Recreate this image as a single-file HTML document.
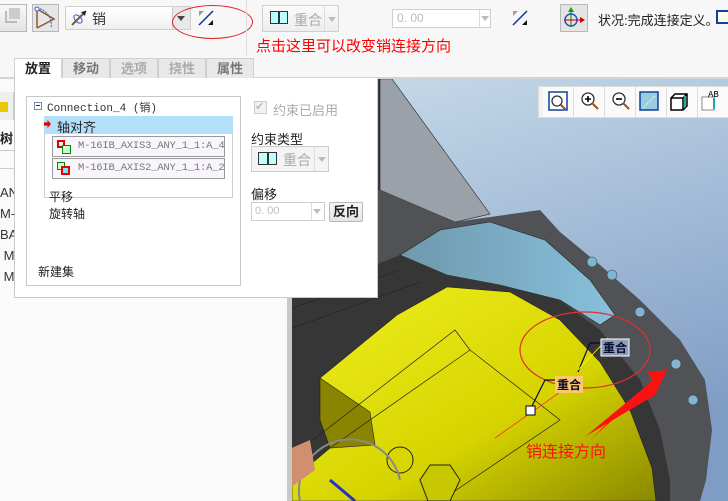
<!DOCTYPE html>
<html><head><meta charset="utf-8"><style>
*{margin:0;padding:0;box-sizing:border-box}
body{width:728px;height:501px;overflow:hidden;position:relative;background:#fafafa;font-family:"Liberation Sans","Noto Sans CJK SC",sans-serif;font-size:12px;color:#222}
.a{position:absolute}
.btn{position:absolute;border:1px solid #b8b8b8;background:linear-gradient(#f8f8f8,#e4e4e4)}
.cmb{position:absolute;border:1px solid #cfcfcf;background:#fff}
.tab{position:absolute;top:58px;height:20px;background:#e8e8e8;border:1px solid #d0d0d0;border-bottom:none;font-weight:bold;color:#888;font-size:13px;text-align:center;line-height:19px}
.vb{position:absolute;top:87px;width:31px;height:30px;border-right:1px solid #ddd;background:#fafafa}
</style></head><body>
<div class="a" style="left:0;top:0;width:728px;height:78px;background:#f7f7f7"></div>
<div class="btn" style="left:-2px;top:4px;width:29px;height:28px"></div>
<div class="a" style="left:5px;top:11px;width:12px;height:12px;border:2px solid #bbb;border-top:none;border-right:none"></div>
<div class="a" style="left:9px;top:8px;width:11px;height:11px;background:#ccc"></div>
<div class="btn" style="left:32px;top:4px;width:27px;height:28px;background:#e6e6e6"></div>
<svg class="a" style="left:32px;top:4px" width="27" height="28"><path d="M5 5 L5 24 M5 5 L22 15 L5 24" stroke="#8a5a2a" stroke-width="1.5" fill="none"/><path d="M5 4 A17 17 0 0 1 19 24" stroke="#3060d0" fill="none" stroke-dasharray="2 1"/><circle cx="5" cy="5" r="2" fill="#fff" stroke="#3060d0"/></svg>
<div class="cmb" style="left:65px;top:6px;width:126px;height:24px;background:linear-gradient(#fff,#f0f0f0)"></div>
<svg class="a" style="left:70px;top:9px" width="20" height="18"><path d="M2 16 L16 2" stroke="#8a5a2a" stroke-width="2"/><path d="M16 2 l-5 1 l4 4z" fill="#222"/><ellipse cx="8" cy="10" rx="5" ry="3" stroke="#3060d0" fill="none" transform="rotate(45 8 10)"/></svg>
<div class="a" style="left:92px;top:9px;font-size:14px;color:#333">销</div>
<div class="a" style="left:172px;top:7px;width:18px;height:22px;border-left:1px solid #ccc;background:#e8e8e8"></div>
<div class="a" style="left:177px;top:16px;border:4px solid transparent;border-top:5px solid #444"></div>
<svg class="a" style="left:196px;top:9px" width="20" height="18"><path d="M3 16 L17 2" stroke="#1030a0" stroke-width="1.5"/><path d="M3 2 l5 0 l-5 5z" fill="#999"/><path d="M17 16 l-5 0 l5 -5z" fill="#111"/></svg>
<div class="a" style="left:172px;top:5px;width:81px;height:34px;border:1px solid #e02020;border-radius:50%"></div>
<div class="a" style="left:246px;top:0;width:1px;height:55px;background:#ddd"></div>
<div class="cmb" style="left:262px;top:5px;width:77px;height:27px;background:linear-gradient(#fafafa,#eee)"></div>
<div class="a" style="left:270px;top:11px;width:18px;height:13px;border:1px solid #333;background:#bff"></div>
<div class="a" style="left:278px;top:11px;width:2px;height:13px;background:#333"></div>
<div class="a" style="left:294px;top:10px;font-size:14px;color:#aaa">重合</div>
<div class="a" style="left:324px;top:6px;width:1px;height:25px;background:#ddd"></div>
<div class="a" style="left:328px;top:17px;border:4px solid transparent;border-top:5px solid #bbb"></div>
<div class="a" style="left:256px;top:35px;font-size:15px;color:#f00">点击这里可以改变销连接方向</div>
<div class="cmb" style="left:392px;top:9px;width:99px;height:19px"></div>
<div class="a" style="left:397px;top:11px;color:#bbb;font-size:12px">0. 00</div>
<div class="a" style="left:479px;top:10px;width:1px;height:17px;background:#ddd"></div>
<div class="a" style="left:481px;top:16px;border:4px solid transparent;border-top:5px solid #bbb"></div>
<svg class="a" style="left:510px;top:9px" width="20" height="18"><path d="M3 16 L17 2" stroke="#1030a0" stroke-width="1.5"/><path d="M3 2 l5 0 l-5 5z" fill="#999"/><path d="M17 16 l-5 0 l5 -5z" fill="#111"/></svg>
<div class="btn" style="left:560px;top:4px;width:28px;height:28px;background:#e4e4e4"></div>
<svg class="a" style="left:560px;top:4px" width="28" height="28"><circle cx="11" cy="16" r="6" stroke="#3050c0" fill="none" stroke-width="1.5"/><path d="M11 6 V23" stroke="#080"/><path d="M11 3 l-3 5 h6z" fill="#0a0"/><path d="M4 16 H22" stroke="#b00"/><path d="M25 16 l-5 -3 v6z" fill="#c00"/></svg>
<div class="a" style="left:598px;top:10px;font-size:13px;color:#222">状况:完成连接定义。</div>
<div class="a" style="left:716px;top:10px;width:14px;height:14px;border:2px solid #1040a0;background:#ffe"></div>
<div class="a" style="left:0;top:77px;width:728px;height:2px;background:#d4d4d4"></div>
<div class="tab" style="left:14px;width:48px;background:#fff;color:#222">放置</div>
<div class="tab" style="left:62px;width:48px;color:#777">移动</div>
<div class="tab" style="left:110px;width:48px;color:#aaa">选项</div>
<div class="tab" style="left:158px;width:48px;color:#aaa">挠性</div>
<div class="tab" style="left:206px;width:48px;color:#777">属性</div>
<div class="a" style="left:0;top:79px;width:288px;height:422px;background:#fafafa"></div>
<div class="a" style="left:0;top:92px;width:14px;height:28px;background:#eee;border-right:1px solid #ccc"></div>
<div class="a" style="left:0;top:102px;width:8px;height:10px;background:#e8c800"></div>
<div class="a" style="left:0;top:128px;font-weight:bold;font-size:13px">树</div>
<div class="a" style="left:0;top:150px;width:14px;height:1px;background:#ccc"></div>
<div class="a" style="left:0;top:168px;width:14px;height:1px;background:#ccc"></div>
<div class="a" style="left:0;top:182px;font-size:13px;color:#333;line-height:21px">AN<br>M-:<br>BAS<br>&nbsp;M<br>&nbsp;M</div>
<svg class="a" style="left:287px;top:79px" width="441" height="422" viewBox="287 79 441 422">
<defs><linearGradient id="bg" x1="0" y1="0" x2="0.3" y2="1"><stop offset="0" stop-color="#c8dcea"/><stop offset="1" stop-color="#7f9cc4"/></linearGradient>
<linearGradient id="yl" x1="0" y1="0" x2="1" y2="1"><stop offset="0" stop-color="#f0f020"/><stop offset="0.6" stop-color="#d6d400"/><stop offset="1" stop-color="#8a8800"/></linearGradient>
<linearGradient id="bl" x1="0" y1="0" x2="1" y2="0"><stop offset="0" stop-color="#6e98ac"/><stop offset="1" stop-color="#88c0dc"/></linearGradient></defs>
<rect x="287" y="79" width="441" height="422" fill="url(#bg)"/>
<polygon points="287,79 380,79 380,300 287,300" fill="#3a3a3a"/>
<polygon points="380,79 392,79 490,214 455,222 380,190" fill="#9aa1a8" stroke="#222" stroke-width="0.6"/>
<polygon points="287,200 380,190 455,222 540,210 560,232 600,265 640,300 680,340 705,380 712,430 706,480 700,501 287,501" fill="#505255"/>
<polygon points="400,255 440,230 490,222 545,240 590,280 615,315 600,325 560,300 500,285 447,275" fill="url(#bl)" stroke="#222" stroke-width="0.6"/>
<polygon points="287,300 400,255 447,275 500,285 560,300 600,330 640,380 660,430 670,480 670,501 287,501" fill="#363636"/>
<path d="M287 310 L400 270 M287 330 L420 282" stroke="#222" stroke-width="0.6"/>
<polygon points="320,378 397,315 447,287 510,292 560,320 600,362 630,410 652,468 656,501 292,501 292,480 330,448" fill="url(#yl)" stroke="#222" stroke-width="0.6"/>
<polygon points="320,378 370,412 375,445 330,448 320,420" fill="#8a8500" stroke="#222" stroke-width="0.6"/>
<path d="M330 448 L470 350 L560 420 L440 501 M470 350 L455 330 L300 450" stroke="#222" fill="none" stroke-width="0.7"/>
<circle cx="400" cy="460" r="13" fill="#d8d800" stroke="#222"/>
<polygon points="430,465 450,465 460,480 450,501 428,501 420,480" fill="#c8c800" stroke="#222"/>
<path d="M300 501 A40 40 0 0 1 400 480" stroke="#888" stroke-width="2" fill="none"/>
<path d="M330 480 L355 501" stroke="#2233cc" stroke-width="3"/>
<polygon points="287,450 310,440 315,470 287,490" fill="#d09070"/>
<g fill="#7fb6d0" stroke="#333" stroke-width="0.5"><circle cx="592" cy="262" r="5"/><circle cx="612" cy="275" r="5"/><circle cx="640" cy="312" r="5"/><circle cx="676" cy="364" r="5"/><circle cx="693" cy="400" r="5"/></g>
<ellipse cx="585" cy="350" rx="65" ry="38" stroke="#e03030" fill="none" stroke-width="1.2"/>
<path d="M495 438 L580 378" stroke="#ff3030" stroke-width="0.8" fill="none"/>
<polygon points="590,440 660,378 667,370 648,372 652,380" fill="#ff1010"/>
<polygon points="586,436 663,372 668,368 655,395" fill="#ff1010"/>
<path d="M530 410 L545 380 L570 380 M578 372 L590 343 L600 343" stroke="#0a0a30" stroke-width="1.2" fill="none"/>
<path d="M578 370 L608 338" stroke="#ff0" stroke-width="0.8"/>
<rect x="526" y="406" width="9" height="9" fill="#fff" stroke="#000"/>
<rect x="555" y="376" width="28" height="17" fill="#fac870"/>
<text x="557" y="389" font-size="12" font-weight="bold" fill="#0a0a30" font-family="Noto Sans CJK SC,sans-serif">重合</text>
<rect x="601" y="339" width="28" height="17" fill="#8aa0b8" stroke="#fff"/>
<text x="603" y="352" font-size="12" font-weight="bold" fill="#0a0a30" font-family="Noto Sans CJK SC,sans-serif">重合</text>
<text x="526" y="457" font-size="16" fill="#ff1010" font-family="Noto Sans CJK SC,sans-serif">销连接方向</text>
<rect x="287" y="79" width="5" height="422" fill="#c8c8c8"/>
</svg>
<div class="a" style="left:538px;top:86px;width:190px;height:32px;background:#f2f2f2;border:1px solid #ddd"></div>
<div class="vb" style="left:543px"></div><div class="vb" style="left:574px"></div><div class="vb" style="left:605px"></div><div class="vb" style="left:636px"></div><div class="vb" style="left:667px"></div><div class="vb" style="left:698px"></div>
<svg class="a" style="left:543px;top:87px" width="185" height="30">
<rect x="6" y="5" width="18" height="18" fill="#fff" stroke="#1040a0" stroke-width="1.5"/><circle cx="14" cy="14" r="5" fill="none" stroke="#333" stroke-width="1.3"/><path d="M18 18 L23 23" stroke="#a05020" stroke-width="2"/>
<circle cx="45" cy="12" r="6" fill="#fff" stroke="#333" stroke-width="1.3"/><path d="M42 12h6M45 9v6" stroke="#000" stroke-width="1.6"/><path d="M49 16 L55 22" stroke="#a05020" stroke-width="2"/>
<circle cx="76" cy="12" r="6" fill="#fff" stroke="#333" stroke-width="1.3"/><path d="M73 12h6" stroke="#000" stroke-width="1.6"/><path d="M80 16 L86 22" stroke="#a05020" stroke-width="2"/>
<rect x="97" y="5" width="18" height="18" fill="#9cd" stroke="#1040a0" stroke-width="1.5"/><path d="M100 21 L113 8" stroke="#fff" stroke-dasharray="1 1"/>
<path d="M128 11 l4 -4 h12 v12 l-4 4 h-12z M128 11 h12 v12 M140 11 l4 -4" fill="#fff" stroke="#000" stroke-width="1.5"/><rect x="141" y="9" width="2" height="11" fill="#2aa"/>
<path d="M159 10 h12 v13 h-12z" fill="#fff" stroke="#888"/><rect x="170" y="11" width="2" height="11" fill="#2aa"/><text x="165" y="10" font-size="9" font-family="Liberation Mono">AB</text>
</svg>
<div class="a" style="left:14px;top:78px;width:364px;height:220px;background:#fff;border:1px solid #c8c8c8;border-top:none"></div>
<div class="a" style="left:26px;top:96px;width:215px;height:190px;border:1px solid #c8c8c8;background:#fff"></div>
<div class="a" style="left:34px;top:102px;width:8px;height:8px;border:1px solid #7a8aa0;background:#fff"></div>
<div class="a" style="left:36px;top:105px;width:4px;height:1px;background:#333"></div>
<div class="a" style="left:47px;top:99px;font-family:'Liberation Mono','Noto Sans CJK SC',monospace;font-size:11px;color:#333">Connection_4 (销)</div>
<div class="a" style="left:44px;top:116px;width:189px;height:18px;background:#b3e0f8"></div>
<div class="a" style="left:44px;top:120px;width:7px;height:8px;background:#e00;clip-path:polygon(0 30%,50% 30%,50% 0,100% 50%,50% 100%,50% 70%,0 70%)"></div>
<div class="a" style="left:57px;top:117px;font-size:13px">轴对齐</div>
<div class="a" style="left:44px;top:134px;width:189px;height:64px;border:1px solid #ccc;border-top:none"></div>
<div class="a" style="left:52px;top:136px;width:173px;height:21px;border:1px solid #999;background:#f8f6fc"></div>
<div class="a" style="left:52px;top:158px;width:173px;height:21px;border:1px solid #999;background:#f8f6fc"></div>
<div class="a" style="left:57px;top:140px;width:8px;height:8px;border:2px solid #d00"></div><div class="a" style="left:62px;top:145px;width:9px;height:9px;border:1px solid #080;background:#cfc"></div>
<div class="a" style="left:57px;top:162px;width:8px;height:8px;border:1px solid #080;background:#cfc"></div><div class="a" style="left:61px;top:166px;width:9px;height:9px;border:2px solid #e00;background:#6ef"></div>
<div class="a" style="left:78px;top:140px;font-family:'Liberation Mono',monospace;font-size:10.5px;letter-spacing:-0.2px;color:#777">M-16IB_AXIS3_ANY_1_1:A_4</div>
<div class="a" style="left:78px;top:162px;font-family:'Liberation Mono',monospace;font-size:10.5px;letter-spacing:-0.2px;color:#777">M-16IB_AXIS2_ANY_1_1:A_2</div>
<div class="a" style="left:49px;top:189px;font-size:12px;line-height:17px">平移<br>旋转轴</div>
<div class="a" style="left:38px;top:263px;font-size:12px">新建集</div>
<div class="a" style="left:254px;top:101px;width:13px;height:13px;border:1px solid #ccc;background:#f2f2f2;color:#bbb;font-size:11px;line-height:11px">✔</div>
<div class="a" style="left:273px;top:100px;font-size:13px;color:#aaa">约束已启用</div>
<div class="a" style="left:251px;top:129px;font-size:13px">约束类型</div>
<div class="a" style="left:251px;top:146px;width:78px;height:26px;border:1px solid #ccc;background:#f4f4f4"></div>
<div class="a" style="left:258px;top:152px;width:19px;height:13px;border:1px solid #333;background:#bff"></div>
<div class="a" style="left:267px;top:152px;width:2px;height:13px;background:#333"></div>
<div class="a" style="left:283px;top:150px;font-size:14px;color:#aaa">重合</div>
<div class="a" style="left:314px;top:147px;width:1px;height:24px;background:#ddd"></div>
<div class="a" style="left:318px;top:157px;border:4px solid transparent;border-top:5px solid #bbb"></div>
<div class="a" style="left:251px;top:184px;font-size:13px">偏移</div>
<div class="a" style="left:251px;top:202px;width:74px;height:19px;border:1px solid #ccc;background:#fff"></div>
<div class="a" style="left:255px;top:205px;font-size:11px;color:#bbb">0. 00</div>
<div class="a" style="left:311px;top:203px;width:1px;height:17px;background:#ddd"></div>
<div class="a" style="left:313px;top:209px;border:4px solid transparent;border-top:5px solid #bbb"></div>
<div class="btn" style="left:329px;top:202px;width:34px;height:20px;font-weight:bold;font-size:13px;text-align:center;line-height:18px;border-radius:2px">反向</div>
</body></html>
